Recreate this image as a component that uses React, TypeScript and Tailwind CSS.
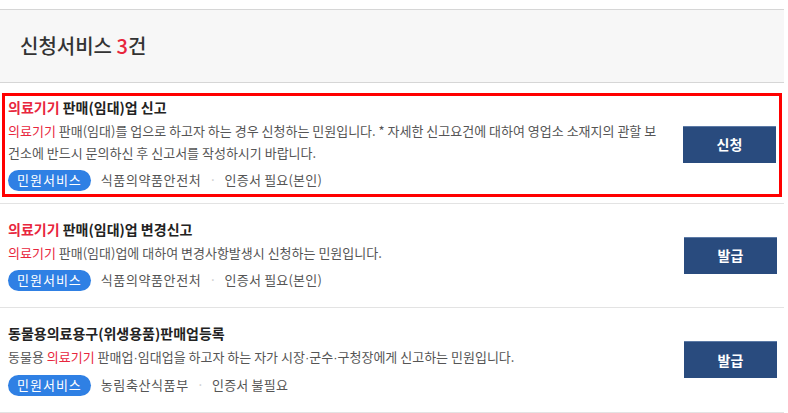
import React from 'react';

type Service = {
  title: React.ReactNode;
  desc: React.ReactNode;
  agency: string;
  cert: string;
  action: string;
  focused?: boolean;
};

const Red = ({ children }: { children: React.ReactNode }) => (
  <span className="text-[#e8263d]">{children}</span>
);

// narrow middle dot (the CJK font draws U+00B7 full width)
const Dot = () => <span className="font-['Liberation_Sans',sans-serif]">·</span>;

const services: Service[] = [
  {
    title: (
      <>
        <Red>의료기기</Red> 판매(임대)업 신고
      </>
    ),
    desc: (
      <>
        <Red>의료기기</Red> 판매(임대)를 업으로 하고자 하는 경우 신청하는 민원입니다. * 자세한 신고요건에 대하여 영업소 소재지의 관할 보건소에 반드시 문의하신 후 신고서를 작성하시기 바랍니다.
      </>
    ),
    agency: '식품의약품안전처',
    cert: '인증서 필요(본인)',
    action: '신청',
    focused: true,
  },
  {
    title: (
      <>
        <Red>의료기기</Red> 판매(임대)업 변경신고
      </>
    ),
    desc: (
      <>
        <Red>의료기기</Red> 판매(임대)업에 대하여 변경사항발생시 신청하는 민원입니다.
      </>
    ),
    agency: '식품의약품안전처',
    cert: '인증서 필요(본인)',
    action: '발급',
  },
  {
    title: <>동물용의료용구(위생용품)판매업등록</>,
    desc: (
      <>
        동물용 <Red>의료기기</Red> 판매업<Dot />임대업을 하고자 하는 자가 시장<Dot />군수<Dot />구청장에게 신고하는 민원입니다.
      </>
    ),
    agency: '농림축산식품부',
    cert: '인증서 불필요',
    action: '발급',
  },
];

function ServiceBody({ s }: { s: Service }) {
  return (
    <div className="flex items-center">
      <div className="flex-1 min-w-0 pr-[22px]">
        <p className="text-[14px] leading-[20px] font-bold text-[#222]">{s.title}</p>
        <p className="mt-[3px] text-[13px] leading-[22px] text-[#555] pr-[4px]">{s.desc}</p>
        <div className="mt-[5px] flex items-center h-[22px] text-[13px] text-[#555]">
          <span className="inline-flex items-center h-[21px] px-[9px] rounded-full bg-[#2f80e4] text-white tracking-[1px]">
            민원서비스
          </span>
          <span className="ml-[10px] tracking-[0.6px]">{s.agency}</span>
          <span className="mx-[8px] text-[#ccc]">·</span>
          <span className="tracking-[0.2px]">{s.cert}</span>
        </div>
      </div>
      <button className="w-[93px] h-[37px] shrink-0 bg-[#294b7e] border-t border-[#5c7aa6] text-white text-[14px] font-bold">
        {s.action}
      </button>
    </div>
  );
}

export default function App() {
  return (
    <div className="w-[788px] h-[413px] overflow-hidden bg-white font-['Noto_Sans_CJK_KR','Noto_Sans',sans-serif]">
      <div className="w-[784px] pt-[9px]">
        <div className="h-[74px] border-y border-[#d6d6d6] bg-[#f7f7f7] flex items-center pl-[20px]">
          <h2 className="text-[20px] font-medium text-[#333]">
            신청서비스 <span className="text-[#e8263d]">3</span>건
          </h2>
        </div>
        <ul>
          {services.map((s, i) =>
            s.focused ? (
              <li key={i} className="pt-[10px] pb-[6px] px-[2px] border-b border-[#e3e3e3]">
                <div className="border-[3px] border-[#ff0000] pt-[1px] pb-[3px] px-[3px]">
                  <ServiceBody s={s} />
                </div>
              </li>
            ) : (
              <li key={i} className="pt-[15px] pb-[16px] pl-[8px] pr-[7px] border-b border-[#e3e3e3]">
                <ServiceBody s={s} />
              </li>
            )
          )}
        </ul>
      </div>
    </div>
  );
}
